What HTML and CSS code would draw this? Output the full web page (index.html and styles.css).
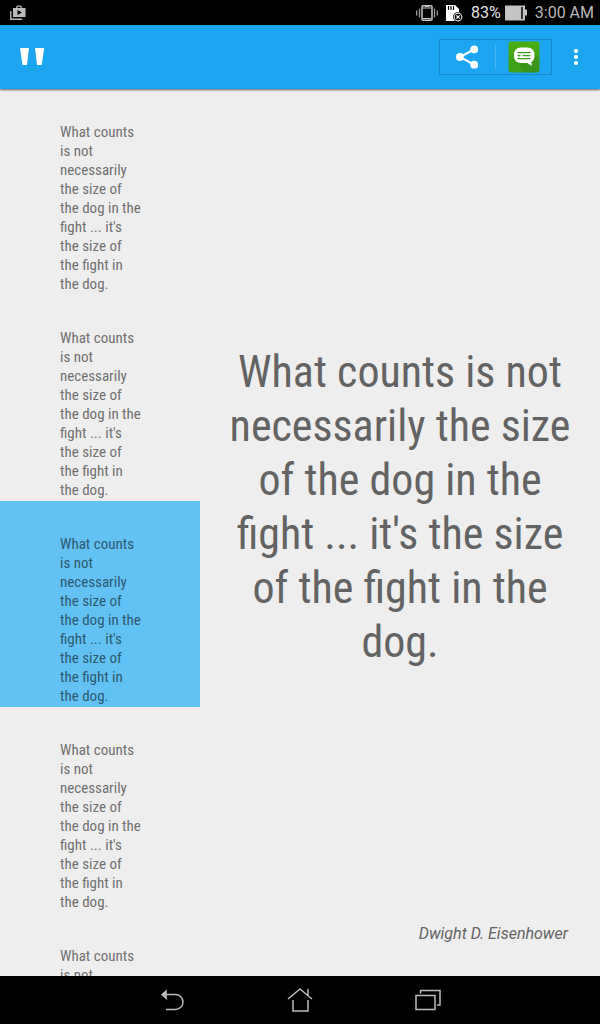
FILE: index.html
```html
<!DOCTYPE html>
<html lang="en">
<head>
<meta charset="utf-8">
<meta name="viewport" content="width=device-width, initial-scale=1">
<title>Quotes</title>
<link rel="stylesheet" href="styles.css">
</head>
<body>
<div class="status-bar">
  <svg class="status-store" width="16" height="16" viewBox="0 0 16 16" aria-hidden="true">
    <path d="M.8 6v8.2h11.4" fill="none" stroke="#bbb" stroke-width="1.4"/>
    <path fill-rule="evenodd" d="M3 3h3.200V1.500L7.200.5h3.600l1 1V3H15.500v9H3zM7.400 3h3.200V1.700H7.400zM7.500 5v5l4.500-2.500z" fill="#bbb"/>
  </svg>
  <div class="status-info">
    <svg width="22" height="18" viewBox="0 0 22 18" fill="none" stroke="#c4c4c4" aria-hidden="true">
      <rect x="6" y="1.700" width="10" height="14.600" rx="1" stroke-width="1.500"/>
      <path d="M7 4h8M9 2.500h4M7 14.500h8" stroke-width="1"/>
      <path d="M3.500 4.500v9M.7 6.500v5M18.500 4.500v9M21.300 6.500v5" stroke="#999" stroke-width="1.300"/>
    </svg>
    <svg width="18" height="18" viewBox="0 0 18 18" aria-hidden="true">
      <path d="M0 1h9l4 4v12H0z" fill="#fff"/>
      <path d="M2.500 2v4M5 2v4M7.500 2v4" stroke="#111" stroke-width="1.200"/>
      <circle cx="12" cy="13" r="5" fill="#000"/>
      <circle cx="12" cy="13" r="3.800" fill="none" stroke="#ddd" stroke-width="1.200"/>
      <path d="M10.300 11.300l3.400 3.400m0-3.400l-3.400 3.400" stroke="#fff" stroke-width="1.200"/>
    </svg>
    <span class="battery-level">83%</span>
    <svg width="22" height="16" viewBox="0 0 22 16" aria-hidden="true">
      <path d="M0 .5h20v4h2v6h-2v5H0z" fill="#c4c4c4"/>
      <path d="M16 2h2v12h-2z" fill="#333"/>
    </svg>
    <time class="clock">3:00 AM</time>
  </div>
</div>
<header class="app-bar">
  <svg class="logo" width="26" height="18" viewBox="0 0 26 18" role="img" aria-label="Quotes">
    <path d="M0 0h9L7 17H2.500zM15 0h9.200l-2.500 17H17z" fill="#fff"/>
  </svg>
  <div class="share-group">
    <button class="share-button" type="button" aria-label="Share">
      <svg width="24" height="24" viewBox="0 0 24 24" aria-hidden="true">
        <path d="M18 4.300L4 12l14 7.700" fill="none" stroke="#fff" stroke-width="2"/>
        <circle cx="18.200" cy="4.300" r="3.900" fill="#fff"/>
        <circle cx="3.900" cy="12" r="3.900" fill="#fff"/>
        <circle cx="18.200" cy="19.700" r="3.900" fill="#fff"/>
      </svg>
    </button>
    <button class="message-button" type="button" aria-label="Share by message">
      <svg width="32" height="32" viewBox="0 0 32 32" aria-hidden="true">
        <defs><linearGradient id="green" x1="0" y1="0" x2="0" y2="1"><stop stop-color="#4bae10"/><stop offset="1" stop-color="#3d9d1c"/></linearGradient></defs>
        <rect x=".5" y=".5" width="31" height="31" rx="3" fill="url(#green)"/>
        <path d="M24 10l7.500 7.500V28a3 3 0 0 1-3 3.500H17L9 21z" fill="#33821b" opacity=".4"/>
        <path d="M13 6.500h6q7.500 0 7.500 7.500v1q0 4.200-3.200 6l.5 4-4.300-3H13q-7 0-7-7V14q0-7.500 7-7.500z" fill="#fff"/>
        <path d="M9.500 11.700h13M9.500 14.700h3m2 0h8M9.500 17.700h13" stroke="#3f9a18" stroke-width="1.300"/>
      </svg>
    </button>
  </div>
  <button class="menu-button" type="button" aria-label="More options">
    <svg width="6" height="18" viewBox="0 0 6 18" fill="#fff" aria-hidden="true">
      <circle cx="3" cy="3" r="2.100"/><circle cx="3" cy="9" r="2.100"/><circle cx="3" cy="15" r="2.100"/>
    </svg>
  </button>
</header>
<main class="content">
  <ul class="quote-list">
    <li class="quote-item">What counts<br>is not<br>necessarily<br>the size of<br>the dog in the<br>fight ... it's<br>the size of<br>the fight in<br>the dog.</li>
    <li class="quote-item">What counts<br>is not<br>necessarily<br>the size of<br>the dog in the<br>fight ... it's<br>the size of<br>the fight in<br>the dog.</li>
    <li class="quote-item selected">What counts<br>is not<br>necessarily<br>the size of<br>the dog in the<br>fight ... it's<br>the size of<br>the fight in<br>the dog.</li>
    <li class="quote-item">What counts<br>is not<br>necessarily<br>the size of<br>the dog in the<br>fight ... it's<br>the size of<br>the fight in<br>the dog.</li>
    <li class="quote-item">What counts<br>is not<br>necessarily<br>the size of<br>the dog in the<br>fight ... it's<br>the size of<br>the fight in<br>the dog.</li>
  </ul>
  <article class="quote-detail">
    <p class="quote-text">What counts is not<br>necessarily the size<br>of the dog in the<br>fight ... it's the size<br>of the fight in the<br>dog.</p>
    <p class="quote-author">Dwight D. Eisenhower</p>
  </article>
</main>
<nav class="nav-bar" aria-label="System">
  <button type="button" aria-label="Back">
    <svg width="24" height="24" viewBox="0 0 24 24" aria-hidden="true">
      <path d="M5 6.500h10.500a7.500 7.500 0 0 1 0 15H6" fill="none" stroke="#bbb" stroke-width="1.500"/>
      <path d="M1 6.500L6.800 1.500v10.500z" fill="#bbb"/>
    </svg>
  </button>
  <button type="button" aria-label="Home">
    <svg width="26" height="24" viewBox="0 0 26 24" fill="none" stroke="#bbb" stroke-width="1.500" aria-hidden="true">
      <path d="M1 11L13 1l12 10M21 7V1M6 12v11h15V12"/>
    </svg>
  </button>
  <button type="button" aria-label="Recent apps">
    <svg width="26" height="24" viewBox="0 0 26 24" fill="none" stroke="#bbb" stroke-width="1.500" aria-hidden="true">
      <path d="M1 7.500h19v14H1zM5.500 5.500v-3h19.500v14.500h-3"/>
    </svg>
  </button>
</nav>
</body>
</html>
```

FILE: styles.css
```css
* {
  box-sizing: border-box;
}

body {
  margin: 0;
  height: 100vh;
  display: flex;
  flex-direction: column;
  overflow: hidden;
  background: #eee;
  color: #636363;
  font-family: "Roboto Condensed", Roboto, "Liberation Sans", sans-serif;
}

button {
  display: flex;
  align-items: center;
  justify-content: center;
  padding: 0;
  border: 0;
  background: none;
}

svg {
  display: block;
  flex: none;
}

.status-bar {
  flex: none;
  height: 25px;
  padding: 0 6px 0 10px;
  display: flex;
  align-items: center;
  justify-content: space-between;
  background: #000;
  color: #b8b8b8;
  font-family: Roboto, sans-serif;
  font-size: 16px;
}

.status-info {
  display: flex;
  align-items: center;
}

.status-info svg + svg {
  margin-left: 8px;
}

.battery-level {
  margin: 0 4px 0 7px;
  color: #e0e0e0;
}

.clock {
  margin-left: 8px;
}

.app-bar {
  flex: none;
  position: relative;
  height: 64px;
  padding: 0 16px 0 20px;
  display: flex;
  align-items: center;
  background: #1ca6f2;
  box-shadow: 0 1px 2px rgba(0, 0, 0, 0.6);
}

.share-group {
  height: 36px;
  margin-left: auto;
  display: flex;
  align-items: center;
  border: 1px solid #168acb;
}

.share-button {
  width: 56px;
  height: 24px;
  border-right: 1px solid #46b5f2;
}

.message-button {
  width: 55px;
}

.menu-button {
  width: 16px;
  height: 36px;
  margin-left: 16px;
}

.content {
  flex: 1;
  min-height: 0;
  display: grid;
  grid-template-columns: 1fr 2fr;
  overflow: hidden;
}

.quote-list {
  min-height: 0;
  margin: 0;
  padding: 0;
  overflow: hidden;
  list-style: none;
}

.quote-item {
  padding: 34px 40px 1px 60px;
  font-size: 15px;
  line-height: 19px;
  color: #707070;
}

.quote-item.selected {
  background: #62c2f4;
  color: #2b5970;
}

.quote-detail {
  min-height: 0;
  padding: 0 32px 32px 24px;
  display: flex;
  flex-direction: column;
}

.quote-text {
  margin: auto -8px auto 0;
  font-size: 44px;
  line-height: 54px;
  text-align: center;
}

.quote-author {
  margin: 0;
  font-family: Roboto, sans-serif;
  font-size: 16px;
  line-height: 20px;
  font-style: italic;
  text-align: right;
}

.nav-bar {
  flex: none;
  height: 48px;
  display: flex;
  align-items: center;
  justify-content: center;
  background: #000;
}

.nav-bar button {
  width: 128px;
  height: 48px;
}
```
